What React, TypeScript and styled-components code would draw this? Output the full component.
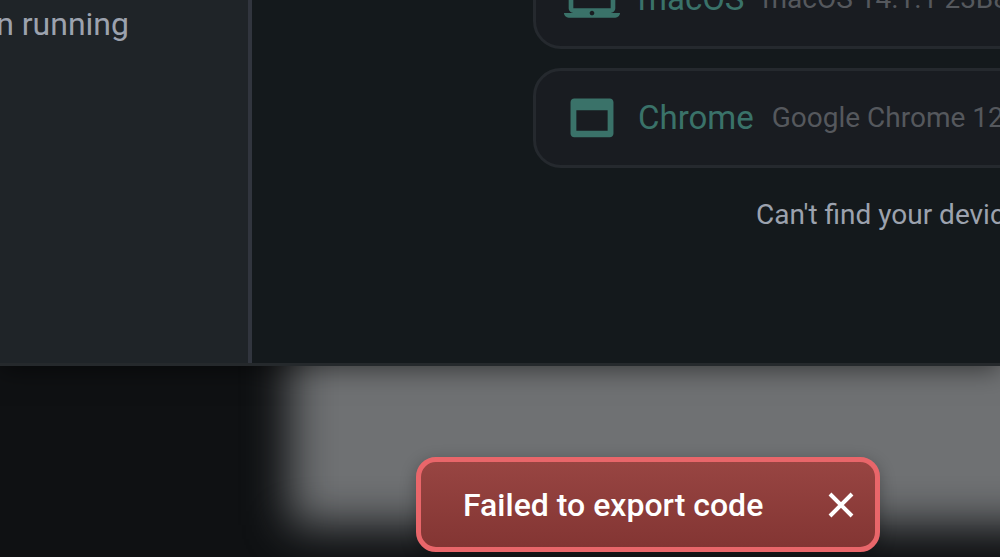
import React from 'react';
import styled, { createGlobalStyle } from 'styled-components';

const GlobalStyle = createGlobalStyle`
  *, *::before, *::after { box-sizing: border-box; }
  body {
    margin: 0;
    background: #0f1113;
    font-family: Roboto, "Liberation Sans", sans-serif;
  }
`;

const Page = styled.div`
  position: relative;
  display: flex;
  flex-direction: column;
  height: 100vh;
  overflow: hidden;
`;

const Dialog = styled.section`
  position: relative;
  z-index: 1;
  display: flex;
  flex: 1;
  min-height: 0;
  border-bottom: 3px solid #25292c;
  background: #14191c;
  box-shadow: 0 4px 24px rgba(0, 0, 0, 0.5);
`;

const Sidebar = styled.aside`
  display: flex;
  flex: 0 0 252px;
  flex-direction: column;
  overflow: hidden;
  border-right: 4px solid #31353e;
  background: #1f2428;
`;

const Hint = styled.p`
  display: flex;
  flex-shrink: 0;
  justify-content: flex-end;
  width: 129px;
  margin: 0;
  padding-top: 4px;
  color: #9ca2ae;
  font-size: 32px;
  line-height: 40px;
  white-space: nowrap;
`;

const Devices = styled.main`
  display: flex;
  flex: 1;
  flex-direction: column;
  justify-content: flex-end;
  min-width: 0;
  overflow: hidden;
  padding: 0 0 128px 281px;
`;

const DeviceList = styled.ul`
  display: flex;
  flex-direction: column;
  flex-shrink: 0;
  gap: 19px;
  margin: 0;
  padding: 0;
  list-style: none;
`;

const DeviceCard = styled.button`
  display: flex;
  align-items: center;
  width: 760px;
  height: 100px;
  padding: 0 28px;
  border: 3px solid #25292e;
  border-radius: 28px;
  background: #191c21;
  font-family: inherit;
  text-align: left;
  white-space: nowrap;
`;

const DeviceIcon = styled.svg`
  flex-shrink: 0;
  width: 56px;
  height: 56px;
  margin-right: 18px;
  fill: #3a7269;
`;

const DeviceName = styled.span`
  margin-right: 18px;
  color: #3a7269;
  font-size: 33px;
  line-height: 40px;
`;

const DeviceDetail = styled.span`
  color: #55585d;
  font-size: 28px;
  line-height: 40px;
`;

const HelpLink = styled.a`
  flex-shrink: 0;
  margin: 27px 0 0 223px;
  color: #9ca2ae;
  font-size: 28px;
  line-height: 40px;
  text-decoration: none;
  white-space: nowrap;
`;

const Backdrop = styled.div`
  display: flex;
  flex: 0 0 191px;
  overflow: hidden;
  padding: 0 0 32px 290px;
`;

const Glow = styled.div`
  flex: 1;
  margin: -80px -80px 0 0;
  background: #6f7173;
  filter: blur(22px);
`;

const Toast = styled.div`
  position: absolute;
  z-index: 2;
  bottom: 5px;
  left: 416px;
  display: flex;
  align-items: center;
  justify-content: space-between;
  width: 464px;
  height: 95px;
  padding: 0 20px 0 42px;
  border: 5px solid #e9666a;
  border-radius: 20px;
  background: linear-gradient(#984542, #833533);
  box-shadow: 0 4px 16px rgba(0, 0, 0, 0.3);
  color: #fff;
  font-size: 32px;
  font-weight: 500;
  line-height: 40px;
  white-space: nowrap;
`;

const CloseButton = styled.button`
  display: flex;
  padding: 0;
  border: 0;
  background: none;
`;

const CloseIcon = styled.svg`
  width: 28px;
  height: 28px;
  stroke: #fff;
  stroke-width: 4;
`;

const devices = [
  {
    name: 'macOS',
    detail: 'macOS 14.1.1 23B81',
    icon: 'M20 18c1.1 0 1.99-.9 1.99-2L22 5c0-1.1-.9-2-2-2H4c-1.1 0-2 .9-2 2v11c0 1.1.9 2 2 2H0c0 1.1.9 2 2 2h20c1.1 0 2-.9 2-2h-4zM4 5h16v11H4V5zm8 14c-.55 0-1-.45-1-1s.45-1 1-1 1 .45 1 1-.45 1-1 1z',
  },
  {
    name: 'Chrome',
    detail: 'Google Chrome 12',
    icon: 'M19.6 3.6H4.4c-.9 0-1.6.7-1.6 1.6v13.4c0 .9.7 1.6 1.6 1.6h15.200c.9 0 1.600-.7 1.600-1.600V5.200c0-.9-.7-1.600-1.600-1.600zM18.700 17.500H5.300V8.700h13.400v8.800z',
  },
];

export default function App() {
  return (
    <>
      <GlobalStyle />
      <Page>
        <Dialog>
          <Sidebar>
            <Hint>n running</Hint>
          </Sidebar>
          <Devices>
            <DeviceList>
              {devices.map((device) => (
                <li key={device.name}>
                  <DeviceCard type="button">
                    <DeviceIcon viewBox="0 0 24 24" aria-hidden="true">
                      <path d={device.icon} />
                    </DeviceIcon>
                    <DeviceName>{device.name}</DeviceName>
                    <DeviceDetail>{device.detail}</DeviceDetail>
                  </DeviceCard>
                </li>
              ))}
            </DeviceList>
            <HelpLink href="#devices">Can't find your device?</HelpLink>
          </Devices>
        </Dialog>
        <Backdrop>
          <Glow />
        </Backdrop>
        <Toast role="alert">
          <span>Failed to export code</span>
          <CloseButton type="button" aria-label="Close">
            <CloseIcon viewBox="0 0 28 28" aria-hidden="true">
              <path d="M3 3l22 22M25 3L3 25" />
            </CloseIcon>
          </CloseButton>
        </Toast>
      </Page>
    </>
  );
}
